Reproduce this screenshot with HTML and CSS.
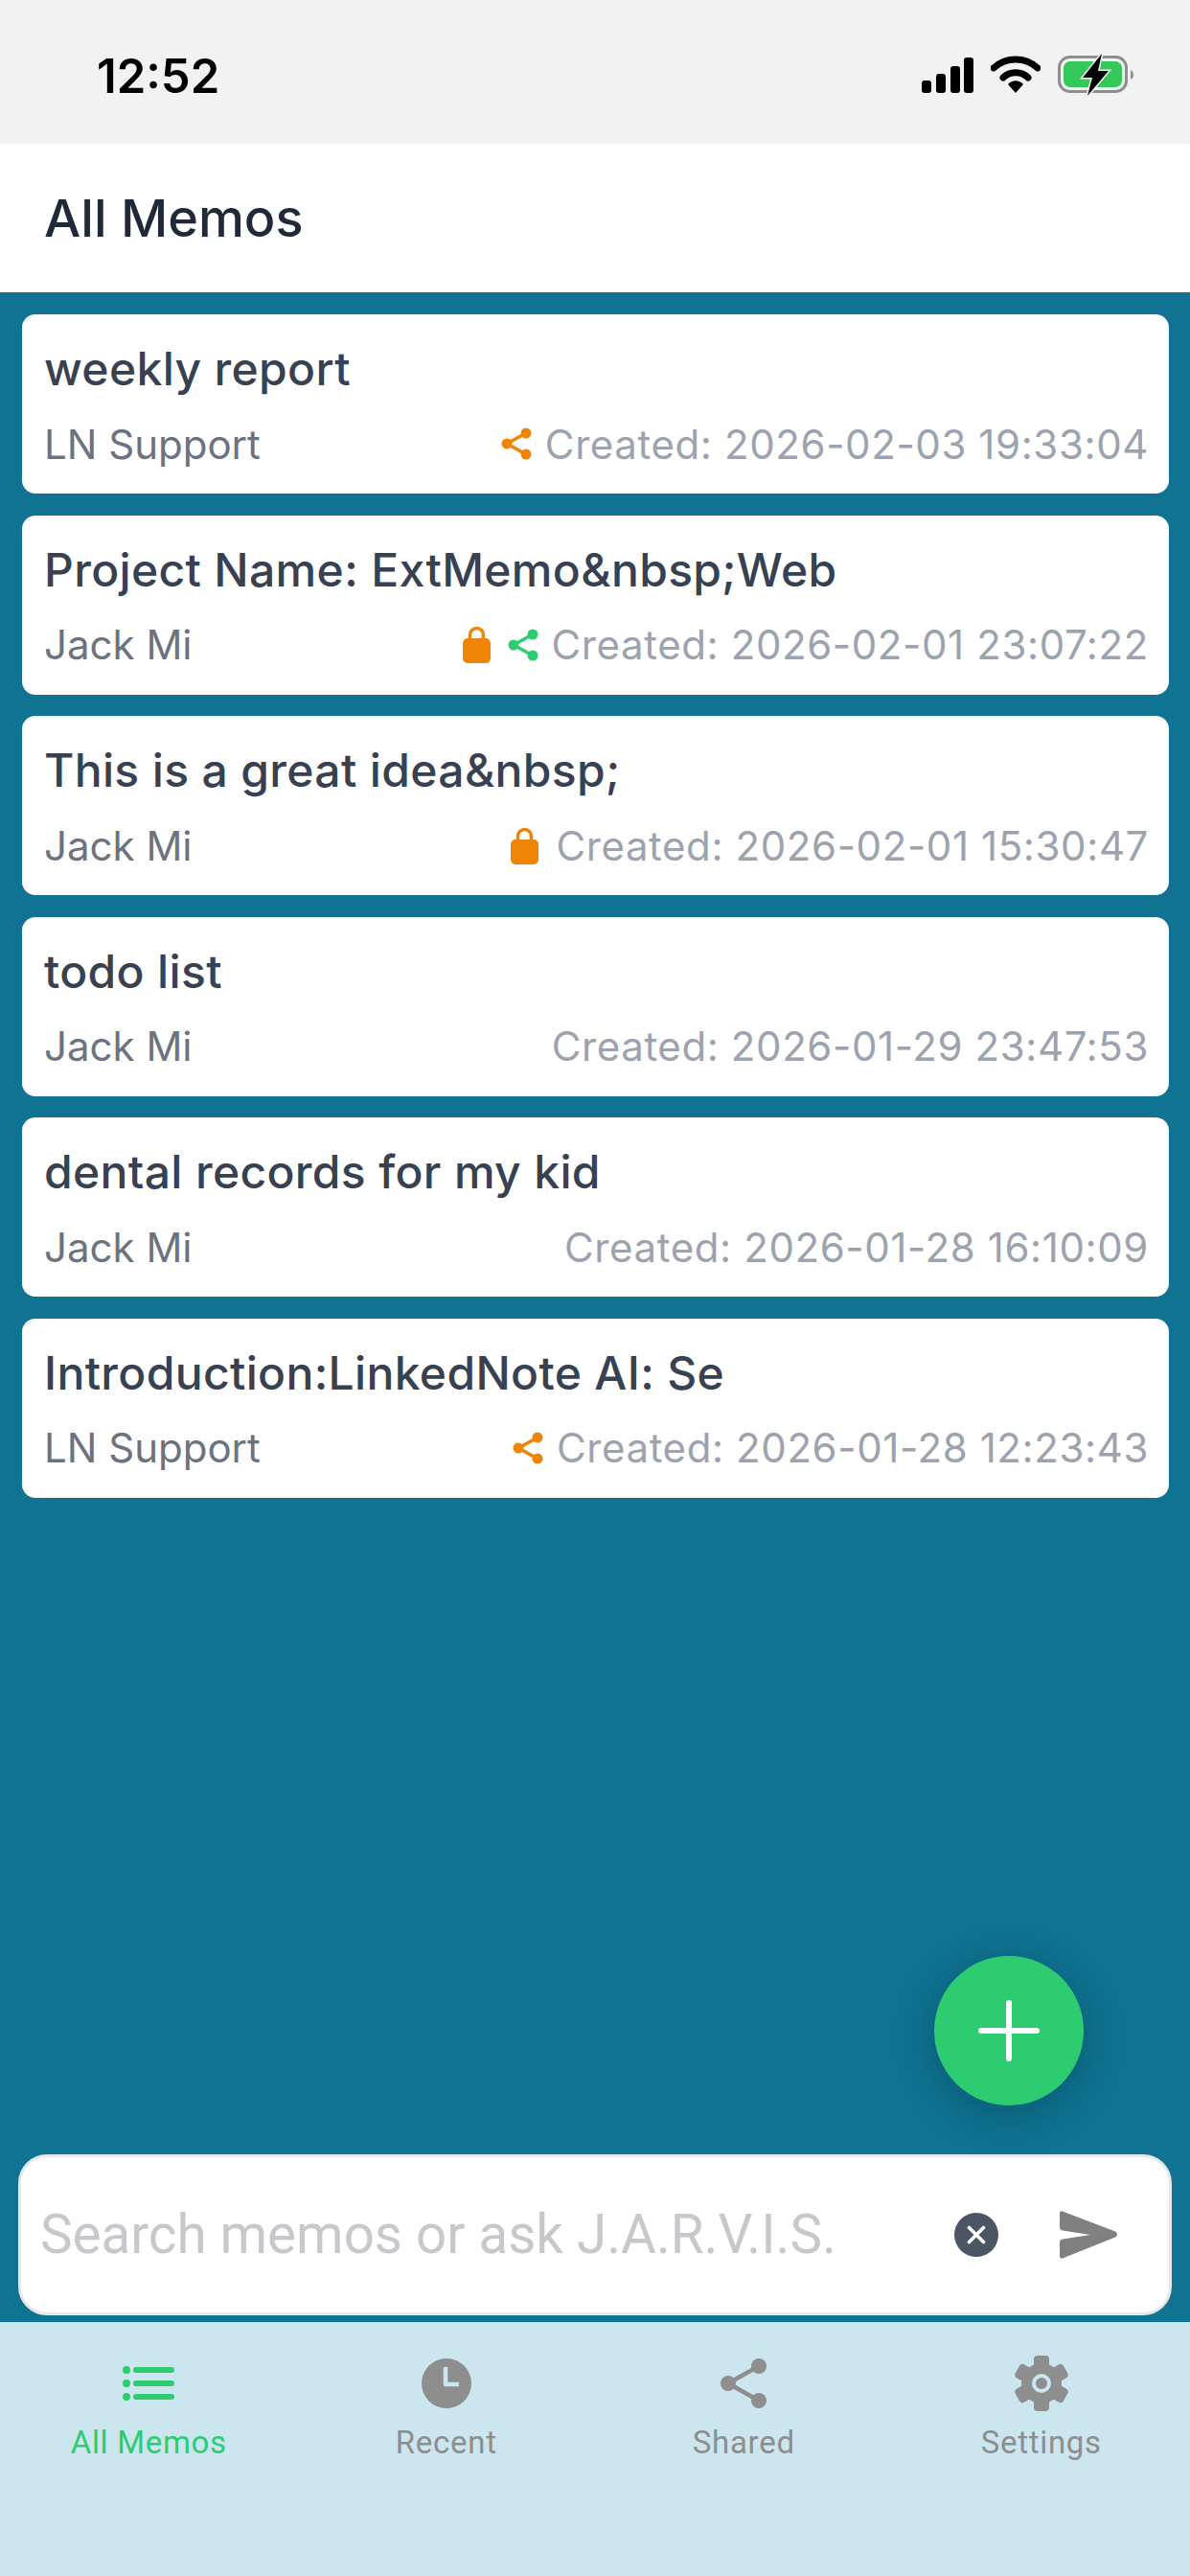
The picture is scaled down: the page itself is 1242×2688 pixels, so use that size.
FILE: index.html
```html
<!DOCTYPE html>
<html lang="en">
  <head>
    <meta charset="UTF-8" />
    <meta name="viewport" content="width=device-width, initial-scale=1.0" />
    <title>All Memos</title>
    <link rel="stylesheet" href="styles.css">
  </head>
  <body>
    <!-- Status bar -->
    <div class="status-bar">
      <span class="time">12:52</span>
      <div class="status-icons">
        <svg class="signal" width="54" height="37" viewBox="0 0 54 37">
          <rect x="0" y="24" width="10" height="13" rx="3" />
          <rect x="15" y="17" width="10" height="20" rx="3" />
          <rect x="30" y="9" width="10" height="28" rx="3" />
          <rect x="44" y="0" width="10" height="37" rx="3" />
        </svg>
        <svg class="wifi" width="52" height="39" viewBox="0 0 52 39">
          <path d="M3 13C16 1 36 1 49 13" fill="none" stroke="#000" stroke-width="7" stroke-linecap="round" />
          <path d="M13 23C20 16 32 16 39 23" fill="none" stroke="#000" stroke-width="7" stroke-linecap="round" />
          <path d="M18 30C23 25 29 25 34 30L26 39Z" />
        </svg>
        <svg class="battery" width="80" height="44" viewBox="0 0 80 44">
          <rect x="1.5" y="3.5" width="70" height="36" rx="11" fill="none" stroke="#8e8e8e" stroke-width="3" />
          <rect x="6" y="8" width="61" height="27" rx="7" fill="#34c759" />
          <path d="M76 17C78 18 79 20 79 22S78 26 76 27Z" fill="#8e8e8e" />
          <path d="M46 0L26 25H36L31 44L53 18H42Z" stroke="#f2f2f2" stroke-width="3" paint-order="stroke" />
        </svg>
      </div>
    </div>

    <!-- Header -->
    <header class="page-header">All Memos</header>

    <main class="content">
      <ul class="memo-list">
        <li class="memo-card">
          <div class="memo-title">weekly report</div>
          <div class="memo-meta">
            <span class="memo-author">LN Support</span>
            <span class="memo-info">
              <svg class="icon-share" width="32" height="34" viewBox="0 0 32 34">
                <path d="M26 6L6 17L26 28" fill="none" stroke="#ef8506" stroke-width="3.5" />
                <circle cx="6" cy="17" r="5.5" fill="#ef8506" />
                <circle cx="26" cy="6" r="5.5" fill="#ef8506" />
                <circle cx="26" cy="28" r="5.5" fill="#ef8506" />
              </svg>
              <span class="memo-date">Created: 2026-02-03 19:33:04</span>
            </span>
          </div>
        </li>
        <li class="memo-card">
          <div class="memo-title">Project Name: ExtMemo&amp;nbsp;Web</div>
          <div class="memo-meta">
            <span class="memo-author">Jack Mi</span>
            <span class="memo-info">
              <svg class="icon-lock" width="29" height="39" viewBox="0 0 29 39">
                <path d="M7.5 16V9.5a7 7 0 0 1 14 0V16" fill="none" stroke="#ef8506" stroke-width="3.5" />
                <rect x="0" y="13" width="29" height="26" rx="5" fill="#ef8506" />
              </svg>
              <svg class="icon-share" width="32" height="34" viewBox="0 0 32 34">
                <path d="M26 6L6 17L26 28" fill="none" stroke="#2ecc71" stroke-width="3.5" />
                <circle cx="6" cy="17" r="5.5" fill="#2ecc71" />
                <circle cx="26" cy="6" r="5.5" fill="#2ecc71" />
                <circle cx="26" cy="28" r="5.5" fill="#2ecc71" />
              </svg>
              <span class="memo-date">Created: 2026-02-01 23:07:22</span>
            </span>
          </div>
        </li>
        <li class="memo-card">
          <div class="memo-title">This is a great idea&amp;nbsp;</div>
          <div class="memo-meta">
            <span class="memo-author">Jack Mi</span>
            <span class="memo-info">
              <svg class="icon-lock" width="29" height="39" viewBox="0 0 29 39">
                <path d="M7.5 16V9.5a7 7 0 0 1 14 0V16" fill="none" stroke="#ef8506" stroke-width="3.5" />
                <rect x="0" y="13" width="29" height="26" rx="5" fill="#ef8506" />
              </svg>
              <span class="memo-date">Created: 2026-02-01 15:30:47</span>
            </span>
          </div>
        </li>
        <li class="memo-card">
          <div class="memo-title">todo list</div>
          <div class="memo-meta">
            <span class="memo-author">Jack Mi</span>
            <span class="memo-info">
              <span class="memo-date">Created: 2026-01-29 23:47:53</span>
            </span>
          </div>
        </li>
        <li class="memo-card">
          <div class="memo-title">dental records for my kid</div>
          <div class="memo-meta">
            <span class="memo-author">Jack Mi</span>
            <span class="memo-info">
              <span class="memo-date">Created: 2026-01-28 16:10:09</span>
            </span>
          </div>
        </li>
        <li class="memo-card">
          <div class="memo-title">Introduction:LinkedNote AI: Se</div>
          <div class="memo-meta">
            <span class="memo-author">LN Support</span>
            <span class="memo-info">
              <svg class="icon-share" width="32" height="34" viewBox="0 0 32 34">
                <path d="M26 6L6 17L26 28" fill="none" stroke="#ef8506" stroke-width="3.5" />
                <circle cx="6" cy="17" r="5.5" fill="#ef8506" />
                <circle cx="26" cy="6" r="5.5" fill="#ef8506" />
                <circle cx="26" cy="28" r="5.5" fill="#ef8506" />
              </svg>
              <span class="memo-date">Created: 2026-01-28 12:23:43</span>
            </span>
          </div>
        </li>
      </ul>

      <!-- Add button -->
      <div class="fab">
        <svg width="64" height="64" viewBox="0 0 64 64">
          <path d="M32 3V61M3 32H61" stroke="#fff" stroke-width="6" stroke-linecap="round" />
        </svg>
      </div>

      <!-- Search box -->
      <div class="search-box">
        <span class="search-text">Search memos or ask J.A.R.V.I.S.</span>
        <svg class="clear-icon" width="46" height="46" viewBox="0 0 46 46">
          <circle cx="23" cy="23" r="23" fill="#4b5563" />
          <path d="M15.5 15.5L30.5 30.5M30.5 15.5L15.5 30.5" stroke="#fff" stroke-width="3.6" stroke-linecap="round" />
        </svg>
        <svg class="send-icon" width="60" height="52" viewBox="0 0 60 52">
          <path d="M3 1.5L58 22.5C60.5 23.5 60.5 27.5 58 28.5L3 50.5C1.5 51 0 50 0 48V34C0 32 1 31 3 30.6L32 26L3 21.4C1 21 0 20 0 18V3.5C0 1.5 1.5 1 3 1.5Z" fill="#808080" />
        </svg>
      </div>
    </main>

    <!-- Tab bar -->
    <nav class="tab-bar">
      <div class="tab active">
        <div class="tab-icon">
          <svg width="54" height="36" viewBox="0 0 54 36">
            <circle cx="4" cy="4" r="4" />
            <circle cx="4" cy="18" r="4" />
            <circle cx="4" cy="32" r="4" />
            <rect x="11" y="1" width="43" height="6" rx="3" />
            <rect x="11" y="15" width="43" height="6" rx="3" />
            <rect x="11" y="29" width="43" height="6" rx="3" />
          </svg>
        </div>
        <span class="tab-label">All Memos</span>
      </div>
      <div class="tab">
        <div class="tab-icon">
          <svg width="52" height="52" viewBox="0 0 52 52">
            <circle cx="26" cy="26" r="26" />
            <path d="M25 9V27H39" fill="none" stroke="#cbe6ef" stroke-width="4.5" stroke-linejoin="round" />
          </svg>
        </div>
        <span class="tab-label">Recent</span>
      </div>
      <div class="tab">
        <div class="tab-icon">
          <svg width="48" height="52" viewBox="0 0 48 52">
            <path d="M40 8L8 26L40 44" fill="none" stroke="#8e8e8e" stroke-width="4.5" />
            <circle cx="8" cy="26" r="8" />
            <circle cx="40" cy="8" r="8" />
            <circle cx="40" cy="44" r="8" />
          </svg>
        </div>
        <span class="tab-label">Shared</span>
      </div>
      <div class="tab">
        <div class="tab-icon">
          <svg width="56" height="58" viewBox="0 0 56 58">
            <circle cx="28" cy="29" r="21" />
            <rect x="20" y="0" width="16" height="58" rx="4" />
            <rect x="20" y="0" width="16" height="58" rx="4" transform="rotate(60 28 29)" />
            <rect x="20" y="0" width="16" height="58" rx="4" transform="rotate(120 28 29)" />
            <circle cx="28" cy="29" r="10" fill="#cbe6ef" />
            <circle cx="28" cy="29" r="6" />
          </svg>
        </div>
        <span class="tab-label">Settings</span>
      </div>
    </nav>
  </body>
</html>
```

FILE: styles.css
```css
body {
  font-family: Inter, "Noto Sans", sans-serif;
  display: flex;
  flex-direction: column;
  width: 1242px;
  height: 2688px;
  margin: 0;
  overflow: hidden;
  background: #0f7391;
}

.status-bar {
  display: flex;
  justify-content: space-between;
  align-items: flex-start;
  height: 150px;
  padding: 57px 58px 0 101px;
  box-sizing: border-box;
  background: #f2f2f2;
}

.time {
  font-size: 49px;
  font-weight: 600;
  line-height: 46px;
  color: #000;
}

.status-icons {
  display: flex;
  align-items: flex-start;
  gap: 18px;
  padding-top: 3px;
}

.wifi {
  margin-top: -2px;
}

.battery {
  margin-top: -4px;
}

.page-header {
  height: 155px;
  padding-left: 46px;
  font-size: 54px;
  font-weight: 500;
  line-height: 155px;
  color: #1f2937;
  background: #fff;
}

.content {
  position: relative;
  flex: 1;
  display: flex;
  flex-direction: column;
  justify-content: space-between;
  padding: 23px 19px 7px;
}

.memo-list {
  display: flex;
  flex-direction: column;
  gap: 22.5px;
  list-style: none;
  margin: 0;
  padding: 0 3px 0 4px;
}

.memo-card {
  height: 187px;
  padding: 29px 21px 0 23px;
  box-sizing: border-box;
  border-radius: 14px;
  background: #fff;
}

.memo-title {
  font-size: 48px;
  font-weight: 500;
  line-height: 56px;
  letter-spacing: 0.35px;
  color: #374151;
}

.memo-meta {
  display: flex;
  justify-content: space-between;
  align-items: center;
  margin-top: 27px;
  height: 46px;
  font-size: 42px;
}

.memo-author {
  color: #6b7280;
}

.memo-info {
  display: flex;
  align-items: center;
  gap: 14px;
}

.memo-date {
  letter-spacing: 0.6px;
  color: #9ca3af;
}

.icon-lock {
  margin-right: 4px;
}

.fab {
  position: absolute;
  left: 975px;
  top: 1736px;
  display: flex;
  justify-content: center;
  align-items: center;
  width: 156px;
  height: 156px;
  border-radius: 50%;
  background: #2ecc71;
  box-shadow: 0 8px 40px rgba(0, 40, 60, 0.35);
}

.search-box {
  display: flex;
  align-items: center;
  height: 168px;
  padding: 0 54px 0 20px;
  box-sizing: border-box;
  border: 3px solid #e5e7eb;
  border-radius: 30px;
  background: #fff;
}

.search-text {
  flex: 1;
  font-family: Roboto, sans-serif;
  font-size: 56.5px;
  color: #c7c7cc;
}

.send-icon {
  margin-left: 64px;
}

.tab-bar {
  display: grid;
  grid-template-columns: repeat(4, 1fr);
  height: 265px;
  background: #cbe6ef;
}

.tab {
  display: flex;
  flex-direction: column;
  align-items: center;
  padding-top: 34px;
  color: #8e8e8e;
  fill: #8e8e8e;
}

.tab.active {
  color: #2ecc71;
  fill: #2ecc71;
}

.tab-icon {
  display: flex;
  align-items: center;
  height: 60px;
}

.tab-label {
  margin-top: 12px;
  font-family: Roboto, sans-serif;
  font-size: 33px;
  line-height: 40px;
  letter-spacing: 0.7px;
}
```
